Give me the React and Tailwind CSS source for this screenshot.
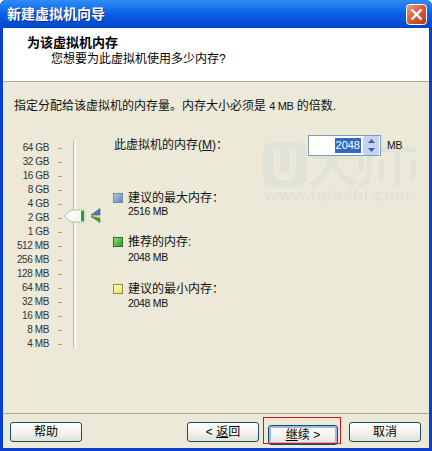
import React from "react";

const FONT = "font-['Liberation_Sans','Noto_Sans_CJK_SC',sans-serif]";

const scaleLabels = [
  "64 GB", "32 GB", "16 GB", "8 GB", "4 GB", "2 GB", "1 GB", "512 MB",
  "256 MB", "128 MB", "64 MB", "32 MB", "16 MB", "8 MB", "4 MB",
];

const CloseIcon = () => (
  <svg width="21" height="21" viewBox="0 0 21 21">
    <defs>
      <linearGradient id="closeBg" x1="0" y1="0" x2="1" y2="1">
        <stop offset="0" stopColor="#e8a58c" />
        <stop offset="0.45" stopColor="#d9623c" />
        <stop offset="1" stopColor="#b93a14" />
      </linearGradient>
    </defs>
    <rect x="0.5" y="0.5" width="20" height="20" rx="3" fill="url(#closeBg)" stroke="#fff" />
    <path d="M5.5 5.5 L15.5 15.5 M15.5 5.5 L5.5 15.5" stroke="#fff" strokeWidth="2.4" />
  </svg>
);

const Thumb = () => (
  <svg width="21" height="14" viewBox="0 0 21 14">
    <path d="M0.5 7 L6.5 1 H20 V13 H6.5 Z" fill="#f8f8f2" stroke="#9fc5a4" />
    <rect x="17" y="2" width="3" height="10" fill="#21a121" />
  </svg>
);

const Marker = () => (
  <svg width="11" height="15" viewBox="0 0 11 15">
    <path d="M1 7 L10 0.5 V7 Z" fill="#4a78b8" stroke="#2f5a96" strokeWidth="0.6" />
    <path d="M1 7.5 L10 7.5 V10 Z" fill="#e8e88a" stroke="#8f9a5a" strokeWidth="0.4" />
    <path d="M1 8.5 L10 14.5 V10.5 Z" fill="#3fa83f" stroke="#1d7a1d" strokeWidth="0.6" />
  </svg>
);

const Legend = ({ color, label, value, valueClass }) => (
  <div className="flex">
    <div className={`w-[10px] h-[10px] mt-[3px] border ${color}`} />
    <div className="ml-[5px]">
      <div className="text-[12px] leading-[16px] text-[#111]">{label}</div>
      <div className={`text-[10.5px] tracking-[-0.3px] leading-[13px] text-[#111] ${valueClass}`}>{value}</div>
    </div>
  </div>
);

const XpButton = ({ children, active, className }) => (
  <button
    className={`w-[72px] h-[20px] rounded-[3px] border border-[#1c4a63] text-[12px] leading-none text-black bg-gradient-to-b from-white via-[#f5f4ee] to-[#e4e1d4] ${
      active ? "shadow-[inset_0_0_0_2px_#9db9e8]" : ""
    } ${className || ""}`}
  >
    {children}
  </button>
);

const Watermark = () => (
  <div className="absolute left-[260px] top-[60px] w-[156px] pointer-events-none">
    <svg width="154" height="45" viewBox="0 0 154 45" fill="none">
      <rect x="0" y="0" width="44" height="45" rx="10" fill="#dfe3d8" />
      <path d="M14 7 V27 Q14 35 22 35 Q30 35 30 27 V7" stroke="#ece9d8" strokeWidth="7" />
      <path d="M50 14 H90 M70 2 Q70 30 48 44 M70 18 Q76 36 92 43" stroke="#dfe3d8" strokeWidth="6" />
      <path d="M98 4 V30 M106 4 V30 Q106 40 96 44 M114 8 H154 M118 18 V40 M134 8 V45 M150 18 V38" stroke="#dfe3d8" strokeWidth="5" />
    </svg>
    <div className="text-[17px] leading-[15px] mt-[1px] ml-[2px] font-bold text-[#e0e2d7] tracking-[0.5px] whitespace-nowrap">
      www.udashi.com
    </div>
  </div>
);

export default function App() {
  return (
    <div className={`w-[432px] h-[451px] flex flex-col overflow-hidden rounded-t-[6px] bg-[#0a3fd0] ${FONT}`}>
      {/* title bar */}
      <div className="h-[28px] shrink-0 flex items-center justify-between pl-[7px] pr-[5px] bg-gradient-to-b from-[#2f8cf5] via-[#0a5fe6] to-[#0346c8]">
        <span className="text-[14px] font-bold text-white [text-shadow:1px_1px_0_#0a2f90]">新建虚拟机向导</span>
        <CloseIcon />
      </div>

      <div className="flex-1 flex flex-col mx-[3px] mb-[3px] bg-[#ece9d8] min-h-0">
        {/* header */}
        <div className="h-[54px] shrink-0 bg-white border-b border-[#aca899] pt-[7px] text-[12px] leading-[16px] text-black">
          <div className="pl-[24px] text-[13px] font-bold">为该虚拟机内存</div>
          <div className="pl-[48px]">您想要为此虚拟机使用多少内存?</div>
        </div>

        {/* body */}
        <div className="relative flex-1 min-h-0">
          <Watermark />
          <div className="relative pl-[11px] pt-[16px] text-[12px] leading-[16px] text-[#111]">
            指定分配给该虚拟机的内存量。内存大小必须是 <span className="text-[11px] tracking-[-0.4px]">4 MB</span> 的倍数.
          </div>

          <div className="relative flex mt-[23px]">
            {/* scale */}
            <div className="w-[46px] pt-[4px] shrink-0">
              {scaleLabels.map((label) => (
                <div key={label} className="h-[14px] text-[10px] tracking-[-0.4px] leading-[14px] text-right text-[#333] whitespace-nowrap">
                  {label}
                </div>
              ))}
            </div>
            <div className="w-[5px] ml-[9px] pt-[4px] shrink-0">
              {scaleLabels.map((label) => (
                <div key={label} className="h-[14px] flex items-center">
                  <div className="w-[4px] h-px bg-[#a5a295]" />
                </div>
              ))}
            </div>

            {/* slider */}
            <div className="relative w-[49px] shrink-0 ml-[1px]">
              <div className="ml-[9px] mt-[3px] w-[3px] h-[208px] rounded-full bg-[#fbfbf8] border-l border-[#b5b2a5]" />
              <div className="absolute left-0 top-[72px]">
                <Thumb />
              </div>
              <div className="absolute left-[26px] top-[71px]">
                <Marker />
              </div>
            </div>

            {/* values */}
            <div className="flex-1">
              <div className="flex items-start">
                <div className="w-[195px] pl-[1px] text-[12px] leading-[16px] text-[#111]">
                  此虚拟机的内存(<span className="underline">M</span>)：
                </div>
                <div className="w-[73px] h-[21px] -mt-[2px] flex items-center justify-end pr-px bg-white border border-[#7f9db9]">
                  <span className="mr-[2px] px-px text-[11px] leading-[15px] text-white bg-[#316ac5]">2048</span>
                  <div className="w-[16px] h-[19px] flex flex-col items-center justify-around rounded-[2px] bg-[#c3d3f7]">
                    <svg width="7" height="4" viewBox="0 0 7 4"><path d="M3.5 0 L7 4 H0 Z" fill="#4d6185" /></svg>
                    <svg width="7" height="4" viewBox="0 0 7 4"><path d="M0 0 H7 L3.5 4 Z" fill="#4d6185" /></svg>
                  </div>
                </div>
                <span className="ml-[6px] text-[10.5px] tracking-[-0.3px] leading-[16px] text-[#111]">MB</span>
              </div>

              <div className="mt-[34px] flex flex-col gap-[17px]">
                <Legend
                  color="border-[#6d87a8] bg-gradient-to-br from-[#b5c9e2] to-[#5f87bb]"
                  label="建议的最大内存："
                  value="2516 MB"
                  valueClass="-mt-[1px] -mb-[1px]"
                />
                <Legend
                  color="border-[#2f6b2a] bg-gradient-to-br from-[#8fdc74] to-[#2f9e2a]"
                  label="推荐的内存:"
                  value="2048 MB"
                  valueClass="mt-[1px]"
                />
                <Legend
                  color="border-[#8f8a55] bg-gradient-to-br from-[#fbf9a8] to-[#efe94e]"
                  label="建议的最小内存："
                  value="2048 MB"
                />
              </div>
            </div>
          </div>
        </div>

        {/* footer */}
        <div className="h-[35px] shrink-0 border-t border-[#aca899] pt-[8px] pl-[7px] flex items-start">
          <XpButton>帮助</XpButton>
          <XpButton className="ml-[105px]">
            {"< "}<span className="underline">返</span>回
          </XpButton>
          <div className="relative ml-[9px]">
            <XpButton active className="w-[70px]!">
              <span className="underline">继</span>续 {">"}
            </XpButton>
            <div className="absolute -left-[5px] -top-[5px] w-[78px] h-[27px] border border-[#d01818] pointer-events-none" />
          </div>
          <XpButton className="ml-[11px]">取消</XpButton>
        </div>
      </div>
    </div>
  );
}
